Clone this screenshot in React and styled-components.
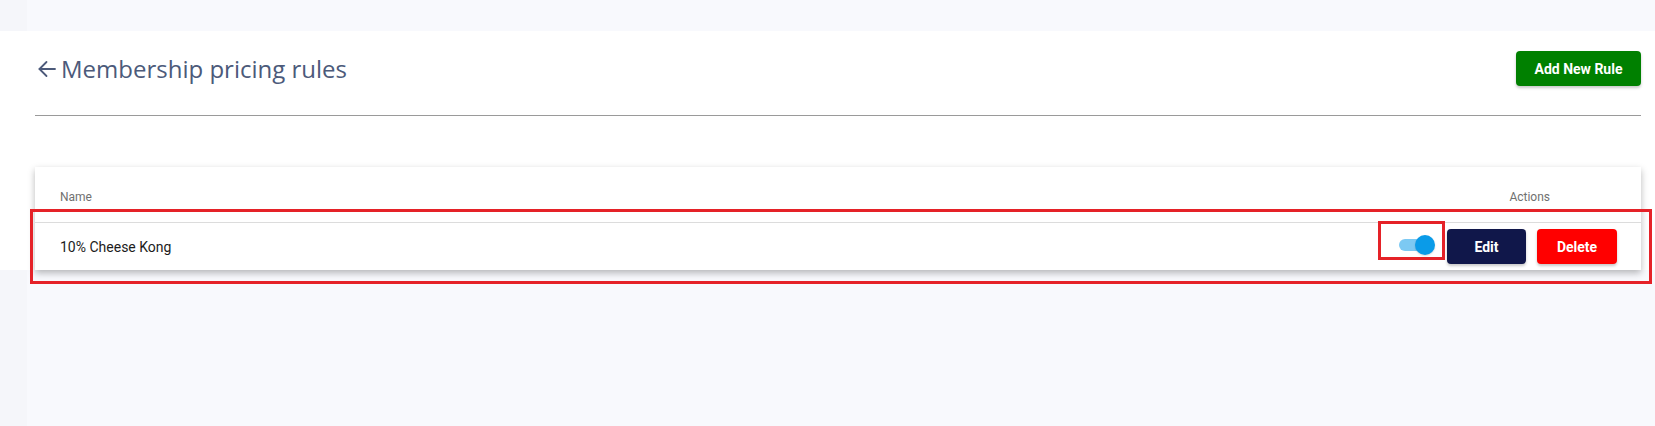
import React from "react";
import styled, { createGlobalStyle } from "styled-components";

const Global = createGlobalStyle`
  html, body { margin: 0; padding: 0; height: 100%; }
  body {
    font-family: Roboto, "Liberation Sans", sans-serif;
    background: linear-gradient(to right, #f5f6fa 0 27px, #f8f9fd 27px);
  }
  #root { min-height: 100vh; }
`;

const Page = styled.div`
  min-height: 100vh;
  padding-top: 31px;
  box-sizing: border-box;
`;

const Section = styled.section`
  background: #ffffff;
  padding: 20px 14px 0 35px;
`;

const HeaderRow = styled.div`
  display: flex;
  align-items: center;
  justify-content: space-between;
  height: 35px;
`;

const Title = styled.h1`
  display: flex;
  align-items: center;
  gap: 5px;
  margin: 0 0 0 3px;
  font-family: "Open Sans", "Liberation Sans", sans-serif;
  font-weight: 400;
  font-size: 24px;
  color: #4c5a7a;
`;

const BackIcon = styled.svg`
  width: 18px;
  height: 18px;
  flex: none;
`;

const Button = styled.button`
  border: none;
  border-radius: 4px;
  height: 35px;
  color: #ffffff;
  font-family: Roboto, "Liberation Sans", sans-serif;
  font-weight: 700;
  font-size: 14px;
  padding: 0;
  width: ${(p) => p.$w}px;
  background: ${(p) => p.$bg};
  box-shadow: 0 2px 3px rgba(0, 0, 0, 0.22);
  cursor: pointer;
`;

const Divider = styled.hr`
  margin: 29px 0 0 0;
  border: none;
  border-top: 1px solid #9a9a9a;
`;

const Card = styled.div`
  margin-top: 51px;
  background: #ffffff;
  box-shadow: 0 3px 7px rgba(0, 0, 0, 0.28);
`;

const HeadRow = styled.div`
  display: flex;
  align-items: center;
  justify-content: space-between;
  height: 56px;
  padding: 4px 91px 0 25px;
  box-sizing: border-box;
  border-bottom: 1px solid #dcdcdc;
  font-size: 12px;
  font-weight: 400;
  color: #707070;
`;

const BodyRow = styled.div`
  position: relative;
  display: flex;
  align-items: center;
  justify-content: space-between;
  height: 47px;
  padding: 0 24px 0 25px;
  font-size: 14px;
  color: #1c1c1c;
`;

const Actions = styled.div`
  display: flex;
  align-items: center;
  gap: 11px;
`;

const SwitchBox = styled.div`
  position: relative;
  width: 36px;
  height: 18px;
  margin-right: 1px;
  margin-bottom: 4px;
`;

const Track = styled.span`
  position: absolute;
  left: 0;
  top: 3px;
  width: 34px;
  height: 12px;
  border-radius: 6px;
  background: #7cc9f3;
`;

const Thumb = styled.span`
  position: absolute;
  right: 0;
  top: -1px;
  width: 20px;
  height: 20px;
  border-radius: 50%;
  background: #0a9be8;
  box-shadow: 0 1px 2px rgba(0, 0, 0, 0.15);
`;

const Mark = styled.div`
  position: absolute;
  border: 3px solid #e52228;
  box-sizing: border-box;
  pointer-events: none;
  left: ${(p) => p.$l}px;
  top: ${(p) => p.$t}px;
  right: ${(p) => p.$r}px;
  bottom: ${(p) => p.$b}px;
`;

export default function App() {
  return (
    <>
      <Global />
      <Page>
        <Section>
          <HeaderRow>
            <Title>
              <BackIcon viewBox="0 0 18 18" fill="none" stroke="#4c5a7a" strokeWidth="1.8" strokeLinecap="round" strokeLinejoin="round">
                <path d="M17 9H1.5" />
                <path d="M8.5 2L1.5 9l7 7" />
              </BackIcon>
              Membership pricing rules
            </Title>
            <Button $bg="#008000" $w={125}>Add New Rule</Button>
          </HeaderRow>
          <Divider />
          <Card>
            <HeadRow>
              <span>Name</span>
              <span>Actions</span>
            </HeadRow>
            <BodyRow>
              <span>10% Cheese Kong</span>
              <Actions>
                <SwitchBox>
                  <Track />
                  <Thumb />
                  <Mark $l={-21} $t={-15} $r={-10} $b={-6} />
                </SwitchBox>
                <Button $bg="#10174a" $w={79}>Edit</Button>
                <Button $bg="#ff0000" $w={80}>Delete</Button>
              </Actions>
              <Mark $l={-5} $t={-14} $r={-11} $b={-14} />
            </BodyRow>
          </Card>
        </Section>
      </Page>
    </>
  );
}
